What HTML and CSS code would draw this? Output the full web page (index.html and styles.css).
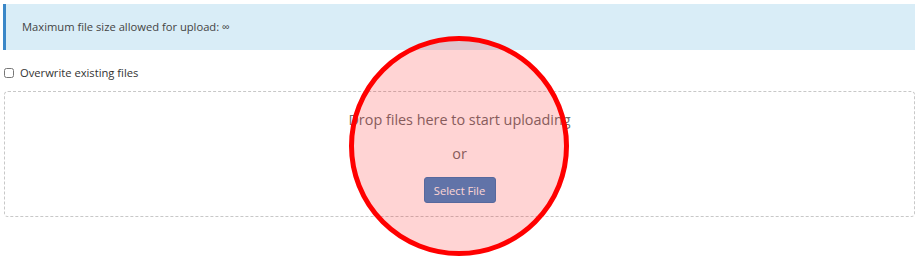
FILE: index.html
```html
<!DOCTYPE html>
<html lang="en">
<head>
    <meta charset="UTF-8">
    <title>Upload</title>
    <link rel="stylesheet" href="styles.css">
</head>
<body>

    <div class="page">
        <div class="alert-info">Maximum file size allowed for upload: &infin;</div>

        <label class="overwrite">
            <input type="checkbox" class="overwrite-box">
            <span>Overwrite existing files</span>
        </label>

        <div class="dropzone">
            <p class="drop-title">Drop files here to start uploading</p>
            <p class="drop-or">or</p>
            <button class="btn-select">Select File</button>
        </div>
    </div>

    <div class="highlight"></div>

</body>
</html>
```
FILE: styles.css
```css
body {
    font-family: "Open Sans", "Liberation Sans", sans-serif;
    font-size: 11.2px;
    color: #333;
    background: white;
    margin: 0;
    padding: 0;
}
.page {
    padding: 4px 9px 0 3px;
}
.alert-info {
    background: #d9edf7;
    border-left: 3px solid #3a87c8;
    padding: 15px 16px;
    line-height: 16px;
    color: #444;
}
.overwrite {
    display: flex;
    align-items: center;
    gap: 6px;
    margin: 16px 0 0 1px;
    height: 14px;
    line-height: 14px;
    color: #333;
}
.overwrite-box {
    margin: 0;
    width: 10px;
    height: 10px;
}
.dropzone {
    margin: 11px 0 0 1px;
    border: 1px dashed #c8c8c8;
    border-radius: 4px;
    height: 126px;
    text-align: center;
    box-sizing: border-box;
}
.drop-title {
    margin: 18px 0 0;
    font-size: 14.4px;
    line-height: 20px;
    color: #6f6f6f;
}
.drop-or {
    margin: 14px 0 0;
    font-size: 14.4px;
    line-height: 20px;
    color: #6f6f6f;
}
.btn-select {
    margin-top: 13px;
    font-family: inherit;
    font-size: 11.2px;
    color: white;
    background: #428bca;
    border: 1px solid #357ebd;
    border-radius: 3px;
    width: 72px;
    height: 26px;
    padding: 0;
}
.highlight {
    position: absolute;
    left: 349px;
    top: 36px;
    width: 220px;
    height: 220px;
    box-sizing: border-box;
    border: 5px solid #ff0000;
    border-radius: 50%;
    background: rgba(255, 0, 0, 0.17);
}
```
